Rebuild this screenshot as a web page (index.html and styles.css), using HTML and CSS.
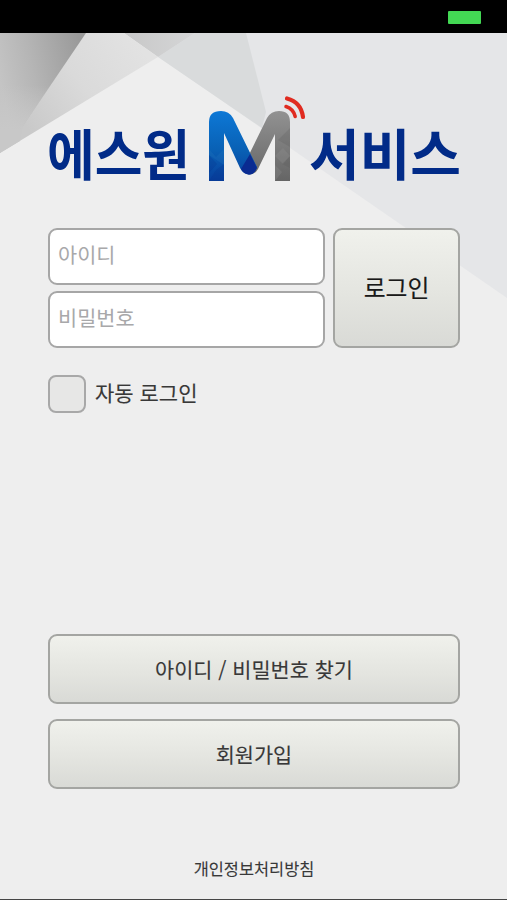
FILE: index.html
```
<!DOCTYPE html>
<html lang="ko">
<head>
<meta charset="utf-8">
<meta name="viewport" content="width=device-width">
<title>에스원 M 서비스</title>
<link rel="stylesheet" href="styles.css">
</head>
<body>
<div class="screen">
  <header class="status"><span class="battery"></span></header>
  <main class="content">
    <svg class="facets" viewBox="0 33 507 267" aria-hidden="true">
      <defs>
        <linearGradient id="dark" gradientUnits="userSpaceOnUse" x1="0" y1="80" x2="84" y2="62">
          <stop offset="0" stop-color="#c4c4c4"/><stop offset=".4" stop-color="#b5b5b5"/><stop offset="1" stop-color="#9a9a9a"/>
        </linearGradient>
        <linearGradient id="shade" gradientUnits="userSpaceOnUse" x1="0" y1="85" x2="0" y2="150">
          <stop offset="0" stop-color="#c8c8c8" stop-opacity="0"/><stop offset=".7" stop-color="#c8c8c8"/>
        </linearGradient>
        <linearGradient id="pale" gradientUnits="userSpaceOnUse" x1="25" y1="125" x2="135" y2="40">
          <stop offset="0" stop-color="#c9c9c9"/><stop offset=".5" stop-color="#dadada"/><stop offset="1" stop-color="#e2e2e2"/>
        </linearGradient>
        <linearGradient id="mid" gradientUnits="userSpaceOnUse" x1="125" y1="0" x2="195" y2="0">
          <stop offset="0" stop-color="#c8c8c8"/><stop offset="1" stop-color="#d5d6d7"/>
        </linearGradient>
      </defs>
      <path d="M124 33H507V298Z" fill="#e5e6e8"/>
      <path d="M195 33H246L266 112 262 128 158 57Z" fill="#d9dbdc"/>
      <path d="M124 33H195L158 57Z" fill="url(#mid)"/>
      <path d="M86 33H124L158 57 0 153V130Z" fill="url(#pale)"/>
      <path d="M0 33H86L23 126 0 153Z" fill="url(#dark)"/>
      <path d="M0 33H86L23 126 20 141 0 153Z" fill="url(#shade)"/>
    </svg>

    <svg class="logo" viewBox="40 90 428 100" role="img" aria-label="에스원 M 서비스">
      <defs>
        <linearGradient id="blue" x1="0" y1="0" x2="0" y2="1">
          <stop offset="0" stop-color="#0d78d6"/><stop offset=".55" stop-color="#0961b5"/><stop offset="1" stop-color="#083f9c"/>
        </linearGradient>
        <linearGradient id="gray" x1="0" y1="0" x2="0" y2="1">
          <stop offset="0" stop-color="#929292"/><stop offset="1" stop-color="#656565"/>
        </linearGradient>
      </defs>
      <text class="logo-text" x="47" y="174.5" textLength="143" lengthAdjust="spacingAndGlyphs">에스원</text>
      <path fill="url(#gray)" d="M275 181V134L258 169Q255 174.500 249 174.500 243 174 243 167L267 118Q271 111 279 111 290 111 290 122V181Z"/>
      <path fill="url(#blue)" d="M209 181V122Q209 111 221 111 229 111 233 118L257 167Q255 174.500 249 174.500 243 174 240 168L224 133V181Z"/>
      <path fill="#0a2b91" d="M250 154 257 168Q254 174.500 249 174.500 244 174 241 169Z"/>
      <path fill="#2d80c5" opacity=".2" d="M209 149 216 157 224 149V165L209 155Z"/>
      <path fill="#052c88" opacity=".22" d="M209 155 217 164 209 173ZM224 164V181H209L216 170Z"/>
      <path fill="#a0a0a0" opacity=".2" d="M275 156 283 148 290 156 283 164ZM275 165 282 172 275 181Z"/>
      <path fill="#4f4f4f" opacity=".18" d="M290 128 278 140 290 147ZM290 156V168L282 164Z"/>
      <g fill="none" stroke="#e02b20" stroke-width="4.200" stroke-linecap="round">
        <path d="M287 98.500Q301 102 303 117"/><path d="M286 106.500Q293.500 109 295.200 116.500" stroke-width="3.500"/>
      </g>
      <text class="logo-text" x="309" y="174.5" textLength="152" lengthAdjust="spacingAndGlyphs">서비스</text>
    </svg>

    <form class="login">
      <div class="fields">
        <input class="field" type="text" placeholder="아이디" aria-label="아이디">
        <input class="field" type="password" placeholder="비밀번호" aria-label="비밀번호">
      </div>
      <button class="button submit" type="button">로그인</button>
    </form>
    <label class="auto"><input class="check" type="checkbox"><span>자동 로그인</span></label>
    <div class="actions">
      <button class="button wide" type="button">아이디 / 비밀번호 찾기</button>
      <button class="button wide" type="button">회원가입</button>
    </div>
    <footer class="privacy">개인정보처리방침</footer>
  </main>
</div>
</body>
</html>
```
FILE: styles.css
```
* { box-sizing: border-box; }
body {
  margin: 0;
  font-family: "Noto Sans CJK KR", sans-serif;
  color: #383838;
}
.screen {
  display: flex;
  flex-direction: column;
  height: 900px;
  overflow: hidden;
  background: #eeeeee;
  border-bottom: 1px solid #454545;
}
.status {
  display: flex;
  justify-content: flex-end;
  height: 33px;
  padding: 11px 26px 0 0;
  background: #000;
}
.battery {
  width: 33px;
  height: 13px;
  border-radius: 1px;
  background: #43d854;
}
.content {
  position: relative;
  flex: 1;
  display: flex;
  flex-direction: column;
  padding: 57px 47px 0 48px;
}
.facets {
  position: absolute;
  top: 0;
  left: 0;
  width: 507px;
  height: 267px;
}
.logo {
  position: relative;
  width: 428px;
  height: 100px;
  margin-left: -8px;
}
.logo-text {
  font-size: 55px;
  font-weight: 700;
  fill: #012b88;
}
.login {
  position: relative;
  display: flex;
  gap: 8px;
  height: 120px;
  margin-top: 38px;
}
.fields {
  display: flex;
  flex-direction: column;
  gap: 6px;
  width: 277px;
}
.field {
  width: 100%;
  height: 57px;
  padding: 0 8px 6px;
  border: 2px solid #a6a6a6;
  border-radius: 9px;
  background: #fff;
  font: 400 20.8px "Noto Sans CJK KR", sans-serif;
  outline: none;
}
.field::placeholder { color: #a8a8aa; opacity: 1; }
.button {
  padding: 0;
  border: 2px solid #a4a5a2;
  border-radius: 9px;
  background: linear-gradient(#f0f1ec, #e4e5e0 55%, #d9dad6);
  font: 400 20.8px "Noto Sans CJK KR", sans-serif;
  color: #383838;
  -webkit-text-stroke: 0.12px;
}
.submit {
  flex: 1;
  padding-bottom: 3px;
  font-size: 23.8px;
  color: #191919;
}
.auto {
  display: flex;
  align-items: center;
  gap: 9px;
  height: 38px;
  margin-top: 27px;
  font-size: 21px;
  -webkit-text-stroke: 0.12px;
}
.auto span { margin-top: -4px; }
.check {
  appearance: none;
  width: 38px;
  height: 38px;
  margin: 0;
  border: 2px solid #a8a8a8;
  border-radius: 8px;
  background: #e7e7e6;
}
.actions {
  display: flex;
  flex-direction: column;
  gap: 15px;
  margin-top: 221px;
}
.wide { height: 70px; padding-bottom: 1px; }
.privacy {
  margin-top: 67px;
  font-size: 16.4px;
  line-height: 24px;
  text-align: center;
  -webkit-text-stroke: 0.1px;
}
```
